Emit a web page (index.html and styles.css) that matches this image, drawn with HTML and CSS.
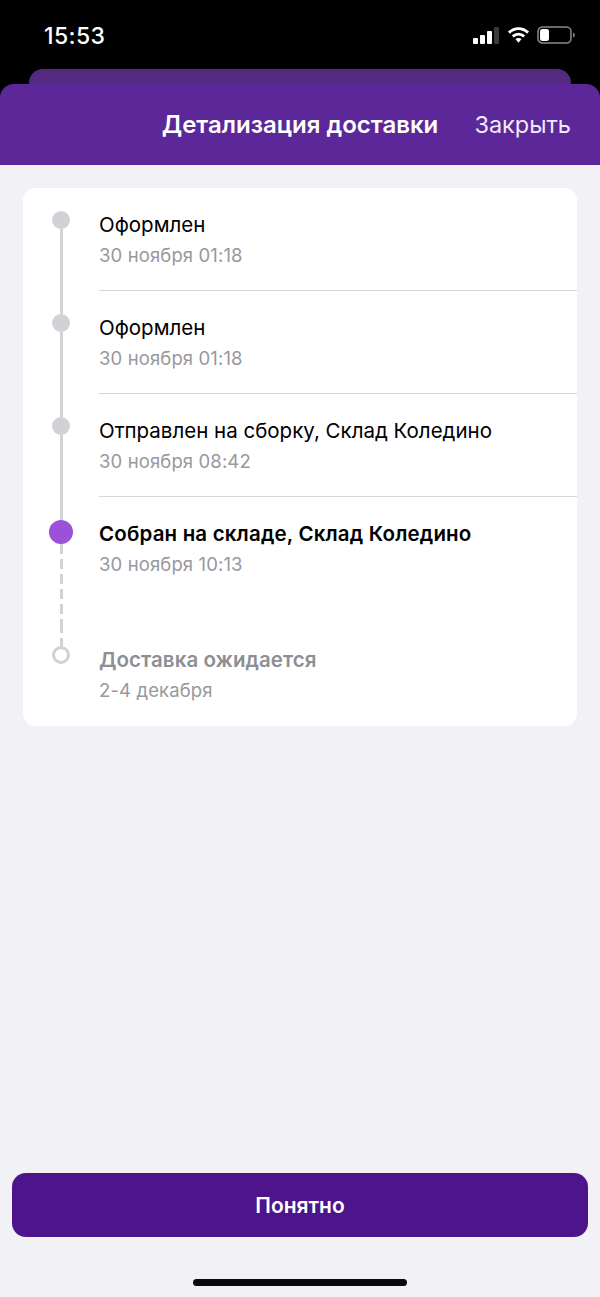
FILE: index.html
```html
<!DOCTYPE html>
<html lang="ru">
<head>
<meta charset="utf-8">
<title>Детализация доставки</title>
<link rel="stylesheet" href="styles.css">
</head>
<body>
<div class="screen">
  <div class="status">
    <span class="time">15:53</span>
    <div class="status-icons">
      <svg class="i-signal" width="27" height="17" viewBox="0 0 27 17"><rect x="0" y="11" width="5" height="6" rx="1" fill="#fff"/><rect x="7" y="8" width="5" height="9" rx="1" fill="#fff"/><rect x="14" y="4" width="5" height="13" rx="1" fill="#fff"/><rect x="21" y="0" width="5" height="17" rx="1" fill="#3a3a3a"/></svg>
      <svg class="i-wifi" width="23" height="18" viewBox="0 0 24 18"><path d="M2 6.500C8 1 16 1 22 6.500" fill="none" stroke="#fff" stroke-width="3"/><path d="M6 10.500c3.600-3.200 8.400-3.200 12 0" fill="none" stroke="#fff" stroke-width="3"/><path d="M8.800 13.200c2-1.600 4.400-1.600 6.400 0L12 17z" fill="#fff"/></svg>
      <svg class="i-battery" width="39" height="18" viewBox="0 0 39 18"><rect x="1" y="1" width="33" height="16" rx="4.500" fill="none" stroke="#8b8b8b" stroke-width="1.500"/><rect x="3" y="3" width="9" height="12" rx="2.500" fill="#fff"/><path d="M36 6.500c1.300.5 2 1.400 2 2.500s-.7 2-2 2.500z" fill="#777"/></svg>
    </div>
  </div>
  <div class="sheet-back"></div>
  <div class="sheet">
    <header class="nav">
      <span></span>
      <h1 class="nav-title">Детализация доставки</h1>
      <span class="nav-close">Закрыть</span>
    </header>
    <main class="body">
      <section class="card">
        <div class="row">
          <div class="marker"><i class="stem stem-top stem-none"></i><i class="dot"></i><i class="stem"></i></div>
          <div class="info info-rule"><div class="title">Оформлен</div><div class="sub">30 ноября 01:18</div></div>
        </div>
        <div class="row">
          <div class="marker"><i class="stem stem-top"></i><i class="dot"></i><i class="stem"></i></div>
          <div class="info info-rule"><div class="title">Оформлен</div><div class="sub">30 ноября 01:18</div></div>
        </div>
        <div class="row">
          <div class="marker"><i class="stem stem-top"></i><i class="dot"></i><i class="stem"></i></div>
          <div class="info info-rule"><div class="title">Отправлен на сборку, Склад Коледино</div><div class="sub">30 ноября 08:42</div></div>
        </div>
        <div class="row row-current">
          <div class="marker"><i class="stem stem-top"></i><i class="dot dot-current"></i><i class="stem stem-dashed"></i></div>
          <div class="info"><div class="title title-current">Собран на складе, Склад Коледино</div><div class="sub">30 ноября 10:13</div></div>
        </div>
        <div class="row">
          <div class="marker"><i class="stem stem-top stem-dashed"></i><i class="dot dot-empty"></i></div>
          <div class="info"><div class="title title-pending">Доставка ожидается</div><div class="sub">2-4 декабря</div></div>
        </div>
      </section>
      <button class="cta" type="button">Понятно</button>
      <div class="home"></div>
    </main>
  </div>
</div>
</body>
</html>
```
FILE: styles.css
```css
* { box-sizing: border-box; }
html, body { margin: 0; padding: 0; }
body { background: #000; font-family: Inter, "Liberation Sans", sans-serif; }
.screen { width: 600px; height: 1297px; display: flex; flex-direction: column; overflow: hidden; background: #000; }

.status { height: 69px; flex: none; display: flex; align-items: flex-start; justify-content: space-between; padding: 22px 24px 0 44px; color: #fff; }
.time { font-size: 23px; line-height: 28px; font-weight: 500; letter-spacing: 0.4px; }
.status-icons { display: flex; align-items: center; gap: 7px; padding-top: 4px; }
.status-icons svg { display: block; }

.sheet-back { height: 15px; flex: none; margin: 0 29px; background: #532a80; border-radius: 14px 14px 0 0; }
.sheet { flex: 1; display: flex; flex-direction: column; min-height: 0; background: #5c2798; border-radius: 14px 14px 0 0; }

.nav { height: 81px; flex: none; display: grid; grid-template-columns: 1fr auto 1fr; align-items: center; padding: 0 29px; color: #fff; }
.nav-title { margin: 0; font-size: 24px; line-height: 28px; font-weight: 600; letter-spacing: 0; }
.nav-close { justify-self: end; font-size: 23.500px; line-height: 28px; font-weight: 400; color: #f1e9f8; }

.body { flex: 1; display: flex; flex-direction: column; align-items: center; background: #f1f1f6; padding-top: 23px; }

.card { width: 554px; height: 538px; flex: none; background: #fff; border-radius: 12px; display: flex; flex-direction: column; }
.row { display: flex; height: 103px; flex: none; }
.row-current { height: 126px; }
.marker { width: 76px; flex: none; display: flex; flex-direction: column; align-items: center; }
.info { flex: 1; padding-top: 24px; }
.info-rule { border-bottom: 1px solid #d8d8dc; }

.stem { flex: 1; width: 3px; background: #d1d1d6; }
.stem-top { flex: 0 0 23px; }
.stem-none { background: transparent; }
.stem-dashed { background: repeating-linear-gradient(to bottom, #d1d1d6 0, #d1d1d6 10px, transparent 10px, transparent 15px); }
.dot { display: block; flex: none; width: 18px; height: 18px; border-radius: 50%; background: #d1d1d6; }
.dot-current { width: 24px; height: 24px; background: #9b51d9; }
.dot-empty { background: #fff; border: 3px solid #d1d1d6; }

.title { font-size: 20.500px; line-height: 26px; color: #000; }
.title-current { font-weight: 600; letter-spacing: 0.17px; }
.title-pending { font-weight: 600; color: #8e8e93; letter-spacing: 0.05px; }
.sub { margin-top: 4px; font-size: 18.500px; line-height: 26px; letter-spacing: 0.12px; color: #98989d; }

.cta { width: 576px; height: 64px; flex: none; margin-top: auto; border: 0; border-radius: 14px; background: #4d148c; color: #fff; font-family: inherit; font-size: 21px; font-weight: 600; padding: 0; }
.home { width: 214px; height: 7px; flex: none; margin: 42px 0 11px; border-radius: 4px; background: #0a0a0a; }
```
